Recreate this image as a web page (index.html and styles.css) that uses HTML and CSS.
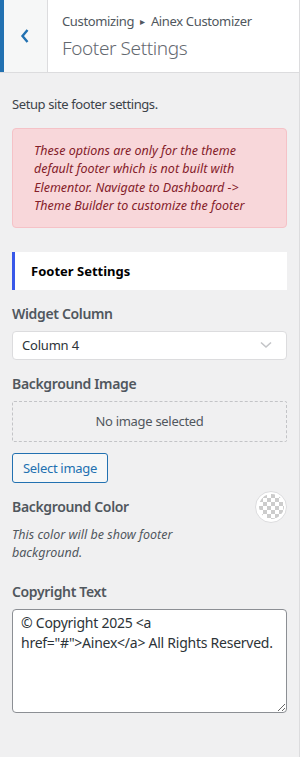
FILE: index.html
```html
<!DOCTYPE html>
<html lang="en">
<head>
  <meta charset="UTF-8" />
  <meta name="viewport" content="width=device-width, initial-scale=1.0"/>
  <title>Footer Settings</title>
  <link rel="stylesheet" href="styles.css">
</head>
<body>
  <div class="panel">
    <div class="panel-head">
      <button class="back-btn" aria-label="Back">
        <svg width="10" height="16" viewBox="0 0 10 16">
          <path d="M7.5 2 L2.5 8 L7.5 14" fill="none" stroke="#2271b1" stroke-width="2.4"/>
        </svg>
      </button>
      <div class="panel-title">
        <span class="crumb">Customizing <span class="crumb-sep">&#9656;</span> Ainex Customizer</span>
        <h2>Footer Settings</h2>
      </div>
    </div>

    <div class="panel-body">
      <p class="panel-desc">Setup site footer settings.</p>

      <div class="notice">
        These options are only for the theme default footer which is not built with Elementor. Navigate to Dashboard -&gt; Theme Builder to customize the footer
      </div>

      <h3 class="section-title">Footer Settings</h3>

      <div class="control">
        <label class="control-label">Widget Column</label>
        <div class="select">
          <span>Column 4</span>
          <svg width="12" height="8" viewBox="0 0 12 8">
            <path d="M1 1.5 L6 6 L11 1.5" fill="none" stroke="#c3c4c7" stroke-width="1.6"/>
          </svg>
        </div>
      </div>

      <div class="control">
        <label class="control-label">Background Image</label>
        <div class="placeholder">No image selected</div>
        <button class="btn">Select image</button>
      </div>

      <div class="control control-color">
        <div class="color-text">
          <label class="control-label">Background Color</label>
          <p class="control-desc">This color will be show footer background.</p>
        </div>
        <span class="swatch"><span class="swatch-inner"></span></span>
      </div>

      <div class="control">
        <label class="control-label">Copyright Text</label>
        <textarea class="textarea">© Copyright 2025 <a href="#">Ainex</a> All Rights Reserved.</textarea>
      </div>
    </div>
  </div>
</body>
</html>
```

FILE: styles.css
```css
* {
  box-sizing: border-box;
  margin: 0;
  padding: 0;
}

body {
  font-family: 'Noto Sans', 'Open Sans', sans-serif;
  font-size: 13px;
  color: #50575e;
  background: #f0f0f1;
}

.panel {
  width: 300px;
  min-height: 757px;
  border-right: 1px solid #dcdcde;
  background: #f0f0f1;
}

.panel-head {
  display: flex;
  height: 73px;
  background: #fff;
  border-bottom: 1px solid #dcdcde;
}

.back-btn {
  width: 48px;
  flex-shrink: 0;
  display: flex;
  align-items: center;
  justify-content: center;
  padding-right: 1px;
  background: #f6f7f7;
  border: none;
  border-left: 4px solid #2271b1;
  border-right: 1px solid #dcdcde;
  cursor: pointer;
}

.panel-title {
  padding: 12px 10px 0 14px;
}

.crumb {
  display: block;
  font-size: 13px;
  line-height: 18px;
  letter-spacing: -0.35px;
  color: #50575e;
}

.crumb-sep {
  font-size: 10px;
  padding: 0 3px;
  vertical-align: 1px;
}

.panel-title h2 {
  margin-top: 5px;
  font-size: 19px;
  font-weight: 300;
  line-height: 26px;
  letter-spacing: -0.4px;
  color: #646970;
}

.panel-body {
  padding: 22px 12px 30px;
}

.panel-desc {
  line-height: 18px;
  letter-spacing: -0.4px;
  color: #3c434a;
  margin-bottom: 15px;
}

.notice {
  background: #f8d7da;
  border: 1px solid #f5c2c7;
  border-radius: 4px;
  padding: 13px 14px 11px 21px;
  font-style: italic;
  font-size: 12.5px;
  line-height: 18.4px;
  color: #842029;
}

.section-title {
  margin: 24px 0 14px;
  height: 38px;
  display: flex;
  align-items: center;
  padding-left: 16px;
  background: #fff;
  border-left: 3px solid #3858e9;
  font-size: 13px;
  font-weight: 700;
  color: #000;
}

.control {
  margin-bottom: 14px;
}

.control-label {
  display: block;
  font-size: 14px;
  font-weight: 600;
  line-height: 20px;
  letter-spacing: -0.35px;
  color: #50575e;
  margin-bottom: 7px;
}

.select {
  height: 29px;
  display: flex;
  align-items: center;
  justify-content: space-between;
  padding: 0 14px 0 9px;
  background: #fff;
  border: 1px solid #dcdcde;
  border-radius: 4px;
  font-size: 13px;
  letter-spacing: -0.2px;
  color: #2c3338;
}

.placeholder {
  height: 41px;
  display: flex;
  align-items: center;
  justify-content: center;
  border: 1px dashed #c3c4c7;
  border-radius: 2px;
  font-size: 13px;
  letter-spacing: -0.3px;
  color: #50575e;
}

.btn {
  margin-top: 11px;
  height: 30px;
  padding: 0 10px;
  font-family: inherit;
  font-size: 13px;
  letter-spacing: -0.3px;
  color: #2271b1;
  background: #f6f7f7;
  border: 1px solid #2271b1;
  border-radius: 3px;
  cursor: pointer;
}

.control-color {
  display: flex;
  justify-content: space-between;
  align-items: flex-start;
  margin-bottom: 20px;
}

.control-desc {
  max-width: 190px;
  padding-top: 2px;
  font-style: italic;
  font-size: 12.5px;
  line-height: 18px;
  color: #50575e;
}

.swatch {
  width: 32px;
  height: 32px;
  margin-top: -6px;
  border-radius: 50%;
  border: 1px solid #dcdcde;
  background: #fff;
  display: flex;
  align-items: center;
  justify-content: center;
}

.swatch-inner {
  width: 25px;
  height: 25px;
  border-radius: 50%;
  background-color: #fff;
  background-image:
    linear-gradient(45deg, #ccc 25%, transparent 25%, transparent 75%, #ccc 75%),
    linear-gradient(45deg, #ccc 25%, transparent 25%, transparent 75%, #ccc 75%);
  background-size: 8px 8px;
  background-position: 0 0, 4px 4px;
}

.textarea {
  display: block;
  width: 100%;
  height: 104px;
  padding: 3px 8px;
  font-family: inherit;
  font-size: 14px;
  line-height: 20px;
  letter-spacing: -0.25px;
  color: #2c3338;
  background: #fff;
  border: 1px solid #8c8f94;
  border-radius: 4px;
  resize: vertical;
}
```
